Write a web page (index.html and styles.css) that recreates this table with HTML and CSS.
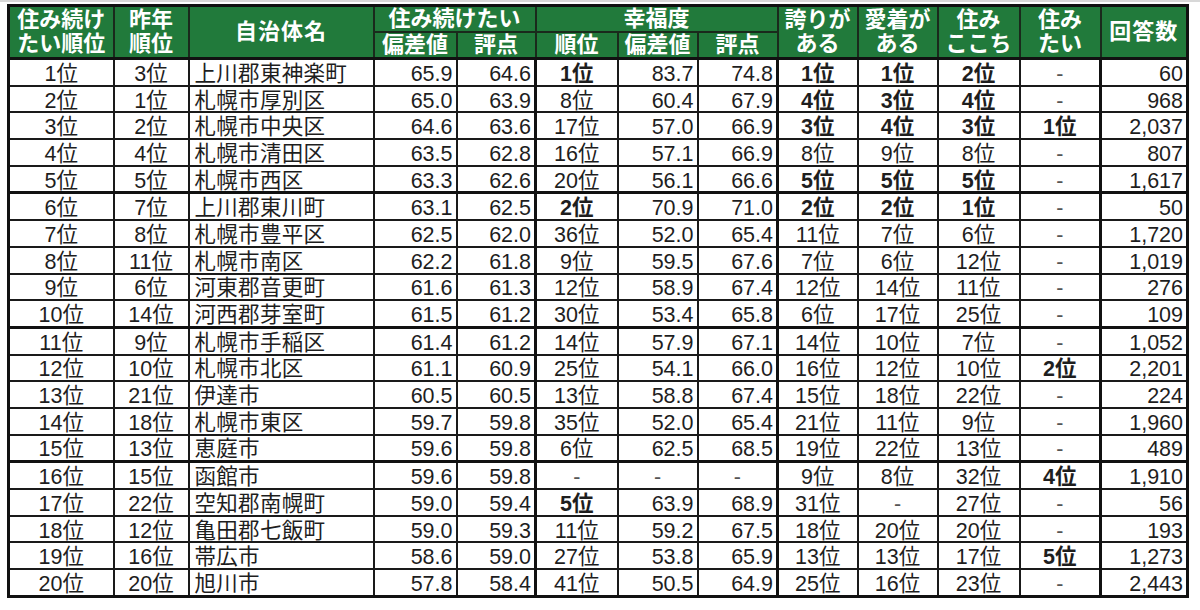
FILE: index.html
```html
<!DOCTYPE html>
<html lang="ja">
<head>
<meta charset="utf-8">
<link rel="stylesheet" href="styles.css">
</head>
<body>
<table class="rank">
<colgroup>
<col style="width:105px"><col style="width:75px"><col style="width:185px"><col style="width:83px"><col style="width:79px"><col style="width:82px"><col style="width:80px"><col style="width:80px"><col style="width:80px"><col style="width:80px"><col style="width:82px"><col style="width:81px"><col style="width:87px">
</colgroup>
<thead>
<tr class="h1">
<th rowspan="2">住み続け<br>たい順位</th>
<th rowspan="2">昨年<br>順位</th>
<th rowspan="2" class="wide">自治体名</th>
<th colspan="2">住み続けたい</th>
<th colspan="3">幸福度</th>
<th rowspan="2">誇りが<br>ある</th>
<th rowspan="2">愛着が<br>ある</th>
<th rowspan="2">住み<br>ここち</th>
<th rowspan="2" class="dot">住み<br>たい</th>
<th rowspan="2" class="wide">回答数</th>
</tr>
<tr class="h2">
<th>偏差値</th>
<th class="dash">評点</th>
<th>順位</th>
<th class="dash">偏差値</th>
<th class="dash">評点</th>
</tr>
</thead>
<tbody>
<tr><td>1位</td><td>3位</td><td>上川郡東神楽町</td><td>65.9</td><td>64.6</td><td class="b">1位</td><td>83.7</td><td>74.8</td><td class="b">1位</td><td class="b">1位</td><td class="b">2位</td><td class="n">-</td><td>60</td></tr>
<tr><td>2位</td><td>1位</td><td>札幌市厚別区</td><td>65.0</td><td>63.9</td><td>8位</td><td>60.4</td><td>67.9</td><td class="b">4位</td><td class="b">3位</td><td class="b">4位</td><td class="n">-</td><td>968</td></tr>
<tr><td>3位</td><td>2位</td><td>札幌市中央区</td><td>64.6</td><td>63.6</td><td>17位</td><td>57.0</td><td>66.9</td><td class="b">3位</td><td class="b">4位</td><td class="b">3位</td><td class="b">1位</td><td>2,037</td></tr>
<tr><td>4位</td><td>4位</td><td>札幌市清田区</td><td>63.5</td><td>62.8</td><td>16位</td><td>57.1</td><td>66.9</td><td>8位</td><td>9位</td><td>8位</td><td class="n">-</td><td>807</td></tr>
<tr class="g"><td>5位</td><td>5位</td><td>札幌市西区</td><td>63.3</td><td>62.6</td><td>20位</td><td>56.1</td><td>66.6</td><td class="b">5位</td><td class="b">5位</td><td class="b">5位</td><td class="n">-</td><td>1,617</td></tr>
<tr><td>6位</td><td>7位</td><td>上川郡東川町</td><td>63.1</td><td>62.5</td><td class="b">2位</td><td>70.9</td><td>71.0</td><td class="b">2位</td><td class="b">2位</td><td class="b">1位</td><td class="n">-</td><td>50</td></tr>
<tr><td>7位</td><td>8位</td><td>札幌市豊平区</td><td>62.5</td><td>62.0</td><td>36位</td><td>52.0</td><td>65.4</td><td>11位</td><td>7位</td><td>6位</td><td class="n">-</td><td>1,720</td></tr>
<tr><td>8位</td><td>11位</td><td>札幌市南区</td><td>62.2</td><td>61.8</td><td>9位</td><td>59.5</td><td>67.6</td><td>7位</td><td>6位</td><td>12位</td><td class="n">-</td><td>1,019</td></tr>
<tr><td>9位</td><td>6位</td><td>河東郡音更町</td><td>61.6</td><td>61.3</td><td>12位</td><td>58.9</td><td>67.4</td><td>12位</td><td>14位</td><td>11位</td><td class="n">-</td><td>276</td></tr>
<tr class="g"><td>10位</td><td>14位</td><td>河西郡芽室町</td><td>61.5</td><td>61.2</td><td>30位</td><td>53.4</td><td>65.8</td><td>6位</td><td>17位</td><td>25位</td><td class="n">-</td><td>109</td></tr>
<tr><td>11位</td><td>9位</td><td>札幌市手稲区</td><td>61.4</td><td>61.2</td><td>14位</td><td>57.9</td><td>67.1</td><td>14位</td><td>10位</td><td>7位</td><td class="n">-</td><td>1,052</td></tr>
<tr><td>12位</td><td>10位</td><td>札幌市北区</td><td>61.1</td><td>60.9</td><td>25位</td><td>54.1</td><td>66.0</td><td>16位</td><td>12位</td><td>10位</td><td class="b">2位</td><td>2,201</td></tr>
<tr><td>13位</td><td>21位</td><td>伊達市</td><td>60.5</td><td>60.5</td><td>13位</td><td>58.8</td><td>67.4</td><td>15位</td><td>18位</td><td>22位</td><td class="n">-</td><td>224</td></tr>
<tr><td>14位</td><td>18位</td><td>札幌市東区</td><td>59.7</td><td>59.8</td><td>35位</td><td>52.0</td><td>65.4</td><td>21位</td><td>11位</td><td>9位</td><td class="n">-</td><td>1,960</td></tr>
<tr class="g"><td>15位</td><td>13位</td><td>恵庭市</td><td>59.6</td><td>59.8</td><td>6位</td><td>62.5</td><td>68.5</td><td>19位</td><td>22位</td><td>13位</td><td class="n">-</td><td>489</td></tr>
<tr><td>16位</td><td>15位</td><td>函館市</td><td>59.6</td><td>59.8</td><td class="n">-</td><td class="n">-</td><td class="n">-</td><td>9位</td><td>8位</td><td>32位</td><td class="b">4位</td><td>1,910</td></tr>
<tr><td>17位</td><td>22位</td><td>空知郡南幌町</td><td>59.0</td><td>59.4</td><td class="b">5位</td><td>63.9</td><td>68.9</td><td>31位</td><td class="n">-</td><td>27位</td><td class="n">-</td><td>56</td></tr>
<tr><td>18位</td><td>12位</td><td>亀田郡七飯町</td><td>59.0</td><td>59.3</td><td>11位</td><td>59.2</td><td>67.5</td><td>18位</td><td>20位</td><td>20位</td><td class="n">-</td><td>193</td></tr>
<tr><td>19位</td><td>16位</td><td>帯広市</td><td>58.6</td><td>59.0</td><td>27位</td><td>53.8</td><td>65.9</td><td>13位</td><td>13位</td><td>17位</td><td class="b">5位</td><td>1,273</td></tr>
<tr><td>20位</td><td>20位</td><td>旭川市</td><td>57.8</td><td>58.4</td><td>41位</td><td>50.5</td><td>64.9</td><td>25位</td><td>16位</td><td>23位</td><td class="n">-</td><td>2,443</td></tr>
</tbody>
</table>
</body>
</html>
```
FILE: styles.css
```css
html, body {
  margin: 0;
  padding: 0;
  background: #ffffff;
}
body {
  padding: 4px 0 0 7px;
  border-top: 2px solid #d8d8d8;
  font-family: "Liberation Sans", "Noto Sans CJK JP", sans-serif;
  color: #1e1e1e;
}
.rank {
  border-collapse: collapse;
  table-layout: fixed;
  width: 1180px;
  border: 3px solid #111;
  margin-top: -2px;
}
.rank th {
  background: #217a3b;
  color: #ffffff;
  font-weight: bold;
  font-size: 22px;
  line-height: 24px;
  padding: 0;
  border: 2px solid #1a2a1c;
  text-align: center;
  vertical-align: middle;
  white-space: nowrap;
}
.rank th.wide {
  letter-spacing: 1px;
}
.rank .h1 th {
  height: 22px;
}
.rank .h2 th {
  height: 23px;
}
.rank th.dash {
  border-left: 2px dashed #c9d9cc;
}
.rank th.dot {
  border-left: 2px dotted #2a2a2a;
}
.rank thead {
  border-bottom: 3px solid #111;
}
.rank td {
  font-size: 21.5px;
  height: 21.7px;
  line-height: 20px;
  padding: 3px 3px 0;
  border: 2px solid #1a1a1a;
  white-space: nowrap;
  overflow: hidden;
  text-align: center;
  vertical-align: middle;
}
.rank tr.g td {
  border-bottom: 3px solid #111;
}
.rank td:nth-child(3) {
  text-align: left;
  padding-left: 5px;
  letter-spacing: 0.3px;
}
.rank td:nth-child(4),
.rank td:nth-child(5),
.rank td:nth-child(7),
.rank td:nth-child(8),
.rank td:nth-child(13) {
  text-align: right;
  padding-right: 3px;
}
.rank td:nth-child(5),
.rank td:nth-child(7),
.rank td:nth-child(8) {
  border-left: 1px dashed #444;
}
.rank td:nth-child(6),
.rank td:nth-child(9),
.rank td:nth-child(13) {
  border-left: 3px solid #111;
}
.rank td:nth-child(4) {
  border-left: 2px solid #111;
}
.rank td:nth-child(12) {
  border-left: 2px dotted #333;
}
.rank td.b {
  font-weight: bold;
}
.rank td.n {
  text-align: center;
  color: #555;
}
```
